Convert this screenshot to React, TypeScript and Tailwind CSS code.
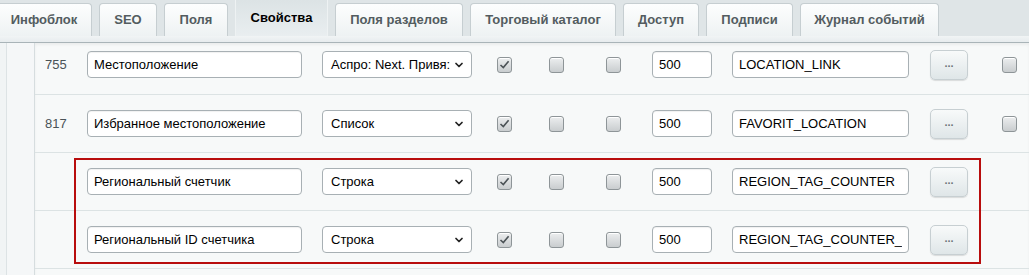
import { ChevronDown } from 'lucide-react'

interface FieldRow {
  id?: string
  name: string
  type: string
  code: string
  extra: boolean
  first?: boolean
}

const tabs = [
  { label: 'Инфоблок', w: 'w-[96px]' },
  { label: 'SEO', w: 'w-[58px]' },
  { label: 'Поля', w: 'w-[64px]' },
  { label: 'Свойства', w: 'w-[93px]', active: true },
  { label: 'Поля разделов', w: 'w-[128px]' },
  { label: 'Торговый каталог', w: 'w-[146px]' },
  { label: 'Доступ', w: 'w-[76px]' },
  { label: 'Подписи', w: 'w-[87px]' },
  { label: 'Журнал событий', w: 'w-[139px]' },
]

const rows: FieldRow[] = [
  { id: '755', name: 'Местоположение', type: 'Аспро: Next. Привя:', code: 'LOCATION_LINK', extra: true, first: true },
  { id: '817', name: 'Избранное местоположение', type: 'Список', code: 'FAVORIT_LOCATION', extra: true },
  { name: 'Региональный счетчик', type: 'Строка', code: 'REGION_TAG_COUNTER', extra: false },
  { name: 'Региональный ID счетчика', type: 'Строка', code: 'REGION_TAG_COUNTER_ID', extra: false },
]

function Checkbox({ checked }: { checked?: boolean }) {
  return (
    <div className="w-[15px] h-[16px] shrink-0 rounded-[3px] border border-[#8e9598] bg-gradient-to-b from-[#eceeef] to-[#c9cdcf] shadow-[inset_0_1px_0_#ffffff] flex items-center justify-center">
      {checked && (
        <svg width="11" height="11" viewBox="0 0 11 11">
          <path d="M1.5 6 L4.3 8.6 L9.6 2.2" fill="none" stroke="#4b5256" strokeWidth="1.6" />
        </svg>
      )}
    </div>
  )
}

const inputCls =
  'h-[27px] shrink-0 rounded-[4px] border border-[#a8b0b4] bg-white px-[6px] text-[13px] text-black outline-none shadow-[inset_0_1px_1px_rgba(0,0,0,0.06)]'

export default function App() {
  return (
    <div className="relative w-[1029px] h-[275px] overflow-hidden bg-[#f7f9f9] font-['Liberation_Sans',Arial,sans-serif]">
      <div className="h-[36px] bg-[#dfe5e7] flex items-end gap-[7px] -ml-[4px]">
        {tabs.map((t) =>
          t.active ? (
            <div
              key={t.label}
              className={`${t.w} h-[36px] shrink-0 border-x border-[#eef2f3] bg-gradient-to-b from-[#dce3e5] to-[#e9eef0] flex items-center justify-center text-[13px] font-bold text-black`}
            >
              {t.label}
            </div>
          ) : (
            <div
              key={t.label}
              className={`${t.w} h-[33px] shrink-0 rounded-t-[4px] border border-b-0 border-[#c6ced1] bg-gradient-to-b from-[#fdfefe] to-[#eef2f3] flex items-center justify-center text-[13px] font-bold text-[#535c60]`}
            >
              {t.label}
            </div>
          )
        )}
      </div>
      <div className="h-[7px] bg-gradient-to-b from-[#f1f4f5] to-[#e7ecee] border-b border-[#a9b4b8]" />

      <div className="flex h-full">
        <div className="w-[35px] shrink-0 flex border-r border-[#d6dddf]">
          <div className="w-[7px] border-r border-[#dde3e5] bg-[#f1f4f5]" />
          <div className="flex-1 bg-[#f5f7f8]" />
        </div>

        <div className="flex-1 shadow-[inset_0_2px_3px_rgba(0,0,0,0.05)]">
          {rows.map((r) => (
            <div
              key={r.code}
              className={`flex items-start border-b border-[#dce3e4] ${r.first ? 'h-[52px] pt-[8px]' : 'h-[58px] pt-[15px]'}`}
            >
              <div className="w-[52px] shrink-0 h-[27px] flex items-center pl-[10px] text-[13px] text-[#4a5357]">
                {r.id}
              </div>
              <input readOnly value={r.name} className={`${inputCls} w-[215px]`} />
              <div className="ml-[20px] w-[150px] h-[27px] shrink-0 rounded-[4px] border border-[#a8b0b4] bg-white flex items-center pl-[8px] pr-[6px] text-[13px] text-black">
                <span className="flex-1 whitespace-nowrap">{r.type}</span>
                <ChevronDown size={12} strokeWidth={3.5} className="shrink-0 ml-[2px] text-[#222]" />
              </div>
              <div className="h-[27px] flex items-center ml-[25px]">
                <Checkbox checked />
              </div>
              <div className="h-[27px] flex items-center ml-[37px]">
                <Checkbox />
              </div>
              <div className="h-[27px] flex items-center ml-[42px]">
                <Checkbox />
              </div>
              <input readOnly value="500" className={`${inputCls} ml-[31px] w-[60px]`} />
              <input readOnly value={r.code} className={`${inputCls} ml-[20px] w-[177px]`} />
              <button className="ml-[21px] -mt-[1px] w-[38px] h-[30px] shrink-0 rounded-[5px] border border-[#c7cfd2] bg-gradient-to-b from-[#f8fafa] to-[#dfe6e8] shadow-[0_1px_1px_rgba(0,0,0,0.12)] text-[11px] font-bold text-[#6b7478] leading-none pb-[3px]">
                ...
              </button>
              {r.extra && (
                <div className="h-[27px] flex items-center ml-[34px]">
                  <Checkbox />
                </div>
              )}
            </div>
          ))}
        </div>
      </div>

      <div className="absolute left-[74px] top-[158px] w-[907px] h-[106px] border-2 border-[#b80d0d] pointer-events-none" />
    </div>
  )
}
